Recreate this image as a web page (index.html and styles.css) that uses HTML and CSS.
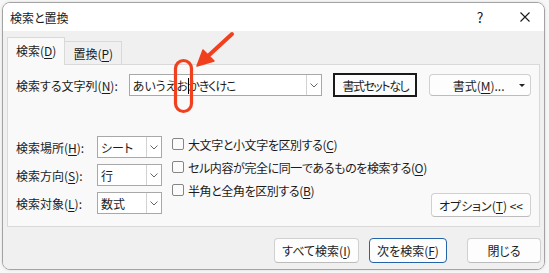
FILE: index.html
```html
<!DOCTYPE html>
<html lang="ja">
  <head>
    <meta charset="UTF-8" />
    <title>検索と置換</title>
    <link rel="stylesheet" href="styles.css">
  </head>
  <body>
    <div class="window">
      <div class="titlebar">
        <span class="title">検索と置換</span>
        <span class="help">?</span>
        <svg class="close" width="10" height="10" viewBox="0 0 10 10">
          <path d="M0.5 0.5 L9.5 9.5 M9.5 0.5 L0.5 9.5" stroke="#1a1a1a" stroke-width="1.1" fill="none" />
        </svg>
      </div>

      <div class="content">
        <div class="tabs">
          <div class="tab active"><span>検索(<u>D</u>)</span></div>
          <div class="tab"><span>置換(<u>P</u>)</span></div>
        </div>

        <div class="panel">
          <div class="find-row">
            <span class="find-label">検索する文字列(<u>N</u>):</span>
            <div class="combo combo-find">
              <span class="combo-value">あいうえお<span class="caret"></span><span class="tail">かきくけこ</span></span>
              <span class="combo-arrow">
                <svg width="8" height="5" viewBox="0 0 8 5"><path d="M0.5 0.5 L4 4 L7.5 0.5" stroke="#666" fill="none" /></svg>
              </span>
            </div>
            <button class="btn btn-noformat"><span>書式セットなし</span></button>
            <button class="btn btn-format">
              <span class="btn-text">書式(<u>M</u>)...</span>
              <svg class="split" width="6" height="3" viewBox="0 0 6 3"><path d="M0 0 L6 0 L3 3 Z" fill="#222" /></svg>
            </button>
          </div>

          <div class="options">
            <div class="selects">
              <span class="opt-label">検索場所(<u>H</u>):</span>
              <div class="combo">
                <span class="combo-value">シート</span>
                <span class="combo-arrow">
                  <svg width="8" height="5" viewBox="0 0 8 5"><path d="M0.5 0.5 L4 4 L7.5 0.5" stroke="#666" fill="none" /></svg>
                </span>
              </div>
              <span class="opt-label">検索方向(<u>S</u>):</span>
              <div class="combo">
                <span class="combo-value">行</span>
                <span class="combo-arrow">
                  <svg width="8" height="5" viewBox="0 0 8 5"><path d="M0.5 0.5 L4 4 L7.5 0.5" stroke="#666" fill="none" /></svg>
                </span>
              </div>
              <span class="opt-label">検索対象(<u>L</u>):</span>
              <div class="combo">
                <span class="combo-value">数式</span>
                <span class="combo-arrow">
                  <svg width="8" height="5" viewBox="0 0 8 5"><path d="M0.5 0.5 L4 4 L7.5 0.5" stroke="#666" fill="none" /></svg>
                </span>
              </div>
            </div>

            <div class="checks">
              <div class="check"><span class="box"></span><span>大文字と小文字を区別する(<u>C</u>)</span></div>
              <div class="check"><span class="box"></span><span>セル内容が完全に同一であるものを検索する(<u>O</u>)</span></div>
              <div class="check"><span class="box"></span><span>半角と全角を区別する(<u>B</u>)</span></div>
            </div>

            <button class="btn btn-options"><span>オプション(<u>T</u>) &lt;&lt;</span></button>
          </div>
        </div>

        <div class="footer">
          <button class="btn btn-all"><span>すべて検索(<u>I</u>)</span></button>
          <button class="btn btn-next"><span>次を検索(<u>F</u>)</span></button>
          <button class="btn btn-close"><span>閉じる</span></button>
        </div>
      </div>
    </div>

    <!-- red annotation drawn over the dialog -->
    <svg class="markup" width="549" height="273" viewBox="0 0 549 273">
      <rect x="175.5" y="60.5" width="16" height="51" rx="8" fill="none" stroke="#f0401e" stroke-width="3.2" />
      <path d="M232 34 L207 57" stroke="#f0401e" stroke-width="4" stroke-linecap="round" />
      <path d="M197 66 L203 50 L214 61 Z" fill="#f0401e" stroke="#f0401e" stroke-width="1.5" stroke-linejoin="round" />
    </svg>
  </body>
</html>
```

FILE: styles.css
```css
* {
  box-sizing: border-box;
}

body {
  margin: 0;
  width: 549px;
  height: 273px;
  overflow: hidden;
  position: relative;
  background: #f7f7f7;
  font-family: "Noto Sans CJK JP", "Noto Sans", sans-serif;
  font-size: 12px;
  font-feature-settings: "palt";
  color: #1b1b1b;
}

u {
  text-underline-offset: 2px;
}

.window {
  margin: 2px 0 0 2px;
  width: 543px;
  height: 268px;
  border: 1px solid #a3a3a3;
  border-radius: 8px;
  overflow: hidden;
  display: flex;
  flex-direction: column;
  box-shadow: 0 0 3px rgba(0, 0, 0, 0.12);
}

.titlebar {
  height: 28px;
  flex: none;
  background: #fff;
  display: flex;
  align-items: center;
  padding-left: 7px;
}

.title {
  font-size: 12px;
}

.help {
  margin-left: auto;
  width: 12px;
  text-align: center;
  font-size: 14px;
  margin-right: 34px;
}

.close {
  margin-right: 14px;
}

.content {
  flex: 1;
  background: #f0f0f0;
  padding: 6px 4px 0 4px;
}

/* tabs */
.tabs {
  display: flex;
  align-items: flex-end;
  height: 27px;
}

.tab {
  height: 23px;
  padding: 0 8px;
  border: 1px solid #d9d9d9;
  border-bottom: none;
  border-left: none;
  background: #f0f0f0;
  display: flex;
  align-items: center;
}

.tab.active {
  height: 28px;
  margin-bottom: -1px;
  border-left: 1px solid #d9d9d9;
  background: #f9f9f9;
  position: relative;
  z-index: 1;
  padding-bottom: 3px;
}

.panel {
  height: 163px;
  border: 1px solid #d9d9d9;
  background: #f9f9f9;
  padding: 8px 8px 0 8px;
  display: flex;
  flex-direction: column;
}

/* first row */
.find-row {
  display: flex;
  align-items: center;
  height: 24px;
}

.find-label {
  width: 113px;
}

.combo {
  height: 22px;
  display: flex;
  align-items: center;
  background: #fff;
  border: 1px solid #a8a8a8;
}

.combo-find {
  width: 194px;
}

.combo-value {
  flex: 1;
  padding-left: 3px;
  white-space: nowrap;
}

.tail {
  letter-spacing: -1px;
}

.caret {
  display: inline-block;
  width: 1px;
  height: 16px;
  margin: 0 -1px 0 0;
  background: #000;
  vertical-align: -3px;
}

.combo-arrow {
  width: 15px;
  height: 100%;
  border-left: 1px solid #d2d2d2;
  display: flex;
  align-items: center;
  justify-content: center;
}

.btn {
  font: inherit;
  font-feature-settings: "palt";
  color: inherit;
  background: #fdfdfd;
  border: 1px solid #d0d0d0;
  border-bottom-color: #bcbcbc;
  border-radius: 4px;
  padding: 0;
  display: flex;
  align-items: center;
  justify-content: center;
  white-space: nowrap;
}

.btn-noformat {
  margin-left: 11px;
  width: 84px;
  height: 24px;
  border: 2px solid #1a1a1a;
  border-radius: 0;
  background: #fdfdfd;
  letter-spacing: -1.5px;
}

.btn-format {
  margin-left: 12px;
  width: 102px;
  height: 22px;
  padding: 0 5px 0 8px;
}

.btn-text {
  flex: 1;
  text-align: center;
}

/* options area */
.options {
  display: flex;
  margin-top: 39px;
}

.selects {
  display: grid;
  grid-template-columns: 81px 65px;
  grid-auto-rows: 22px;
  row-gap: 6px;
  align-items: center;
}

.checks {
  margin-left: 10px;
  display: flex;
  flex-direction: column;
  gap: 7px;
}

.check {
  height: 16px;
  display: flex;
  align-items: center;
  gap: 4px;
  white-space: nowrap;
  letter-spacing: -0.4px;
}

.box {
  width: 12px;
  height: 12px;
  border: 1px solid #858585;
  border-radius: 2px;
  background: #fbfbfb;
}

.btn-options {
  margin-left: auto;
  align-self: flex-end;
  margin-bottom: -3px;
  width: 100px;
  height: 24px;
}

/* bottom buttons */
.footer {
  display: flex;
  justify-content: flex-end;
  margin-top: 11px;
  margin-right: -1px;
}

.footer .btn {
  height: 25px;
}

.btn-all {
  width: 85px;
}

.btn-next {
  width: 78px;
  margin-left: 10px;
  border: 1px solid #2563a8;
}

.btn-close {
  width: 74px;
  margin-left: 20px;
}

.markup {
  position: absolute;
  left: 0;
  top: 0;
  pointer-events: none;
}
```
